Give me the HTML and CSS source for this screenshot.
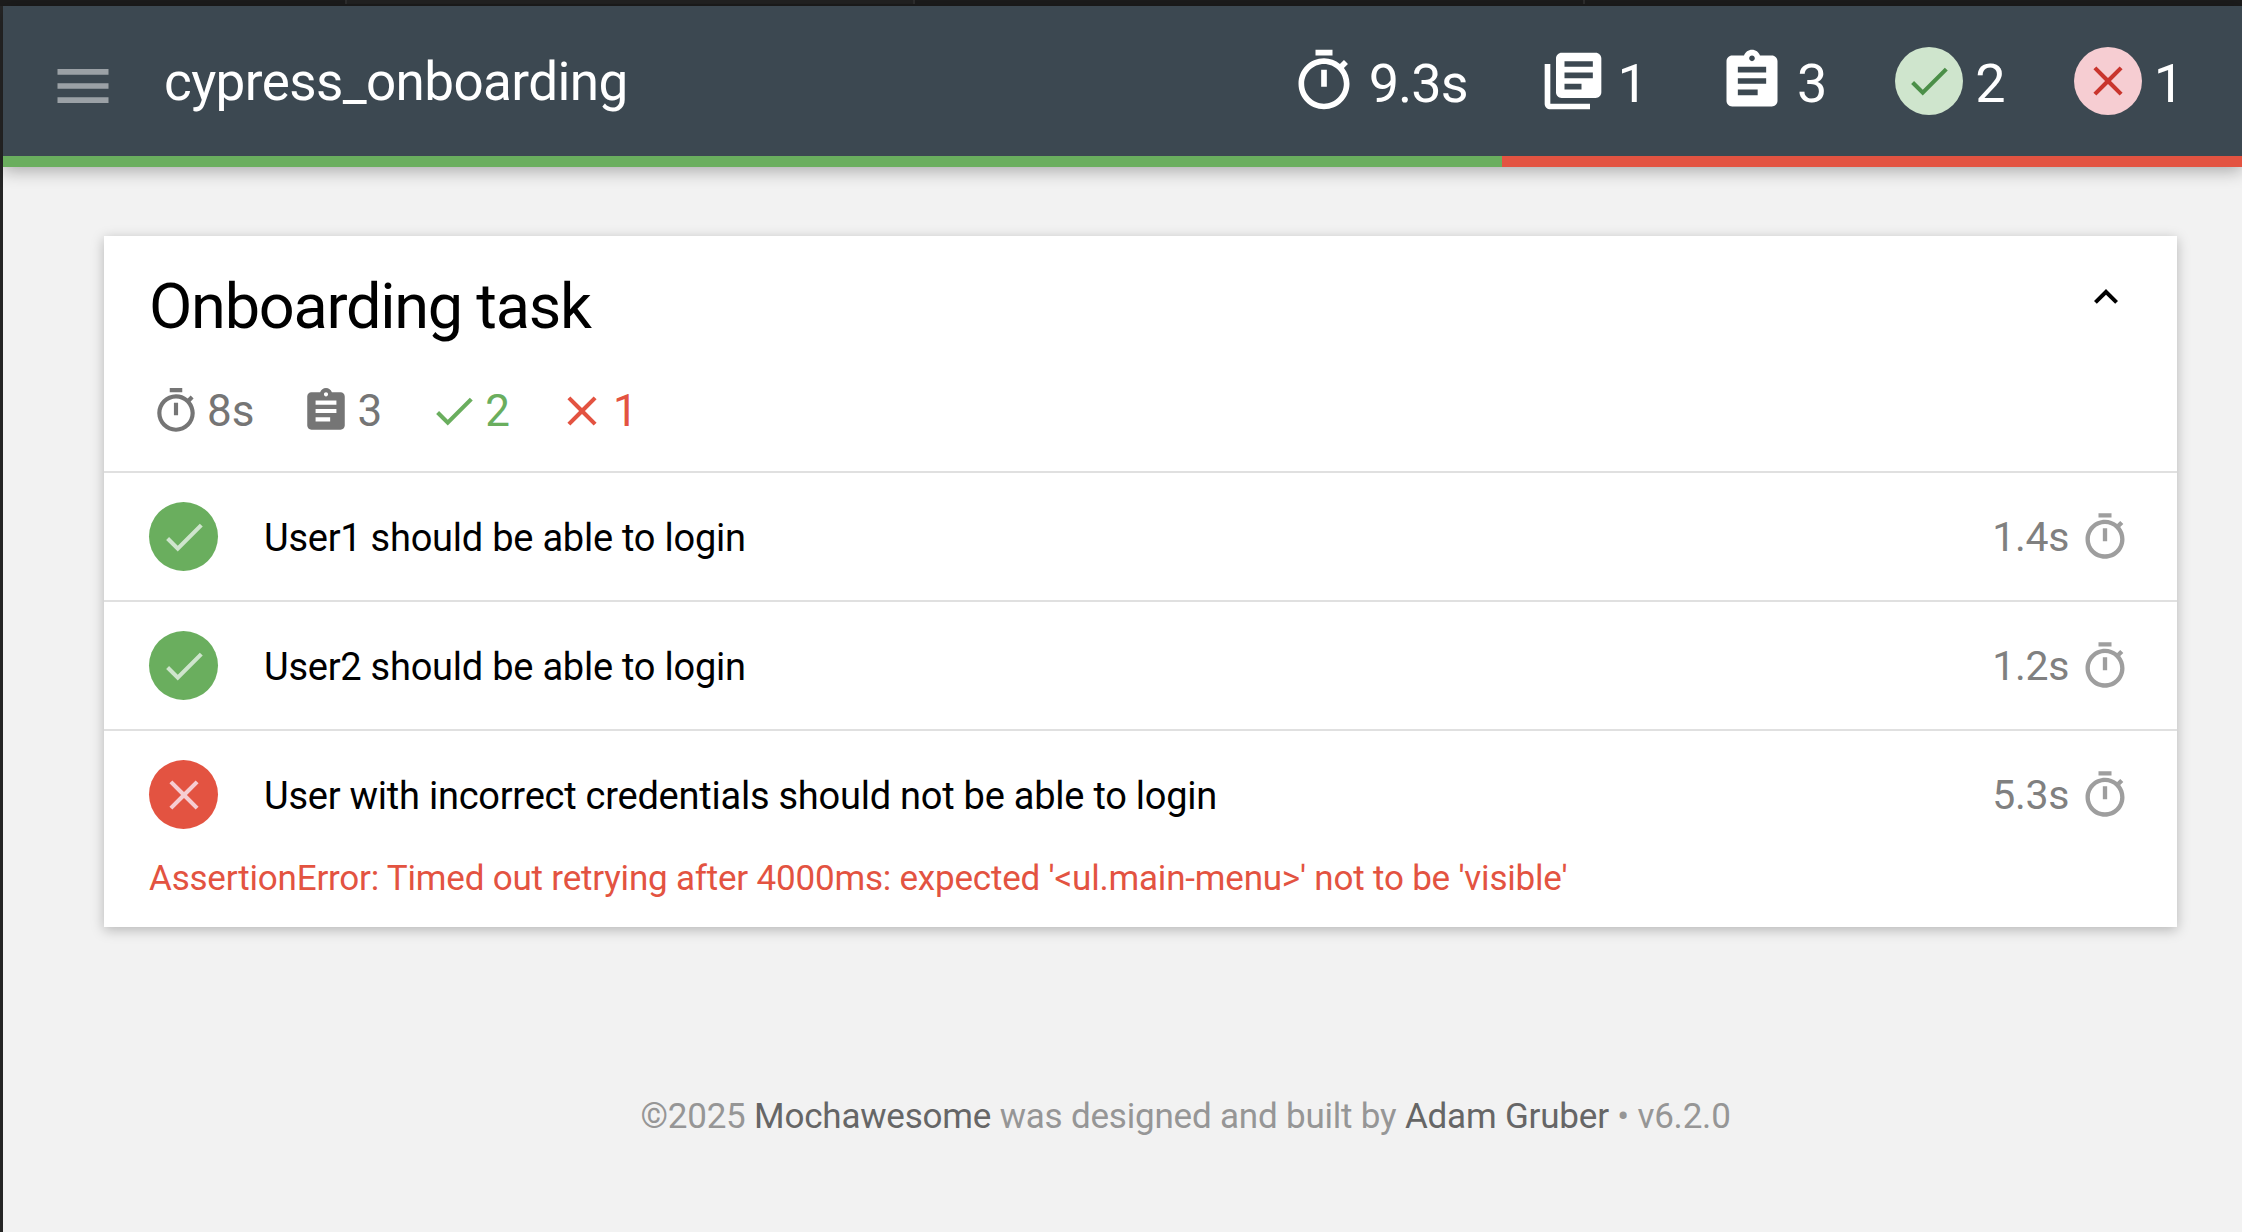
FILE: index.html
```html
<!DOCTYPE html>
<html lang="en">
<head>
    <meta charset="UTF-8">
    <title>cypress_onboarding</title>
    <link rel="stylesheet" href="styles.css">
</head>
<body>
    <svg class="sprites" width="0" height="0">
        <symbol id="i-timer" viewBox="0 0 24 24"><path d="M15 1H9v2h6V1zm-4 13h2V8h-2v6zm8.03-6.61l1.42-1.42c-.43-.51-.9-.99-1.41-1.41l-1.42 1.42C16.07 4.74 14.12 4 12 4c-4.97 0-9 4.03-9 9s4.02 9 9 9 9-4.03 9-9c0-2.12-.74-4.07-1.97-5.61zM12 20c-3.87 0-7-3.13-7-7s3.13-7 7-7 7 3.13 7 7-3.13 7-7 7z"/></symbol>
        <symbol id="i-books" viewBox="0 0 24 24"><path d="M4 6H2v14c0 1.1.9 2 2 2h14v-2H4V6zm16-4H8c-1.1 0-2 .9-2 2v12c0 1.1.9 2 2 2h12c1.1 0 2-.9 2-2V4c0-1.1-.9-2-2-2zm-1 9H9V9h10v2zm-4 4H9v-2h6v2zm4-8H9V5h10v2z"/></symbol>
        <symbol id="i-assign" viewBox="0 0 24 24"><path d="M19 3h-4.18C14.4 1.84 13.3 1 12 1c-1.3 0-2.4.84-2.82 2H5c-1.1 0-2 .9-2 2v14c0 1.1.9 2 2 2h14c1.1 0 2-.9 2-2V5c0-1.1-.9-2-2-2zm-7 0c.55 0 1 .45 1 1s-.45 1-1 1-1-.45-1-1 .45-1 1-1zm2 14H7v-2h7v2zm3-4H7v-2h10v2zm0-4H7V7h10v2z"/></symbol>
        <symbol id="i-check" viewBox="0 0 24 24"><path d="M9 16.17L4.83 12l-1.41 1.41L9 19 21 7l-1.41-1.41z"/></symbol>
        <symbol id="i-close" viewBox="0 0 24 24"><path d="M19 6.41L17.59 5 12 10.59 6.41 5 5 6.41 10.59 12 5 17.59 6.41 19 12 13.41 17.59 19 19 17.59 13.41 12z"/></symbol>
        <symbol id="i-menu" viewBox="0 0 24 24"><path d="M3 18h18v-2H3v2zm0-5h18v-2H3v2zm0-7v2h18V6H3z"/></symbol>
        <symbol id="i-less" viewBox="0 0 24 24"><path d="M12 8l-6 6 1.41 1.41L12 10.83l4.59 4.58L18 14z"/></symbol>
    </svg>

    <div class="top-strip">
        <div class="strip-seg strip-a"></div>
        <div class="strip-seg strip-b"></div>
        <div class="strip-seg strip-c"></div>
        <div class="strip-seg strip-d"></div>
    </div>

    <header class="navbar">
        <div class="nav-main">
            <svg class="nav-menu"><use href="#i-menu"/></svg>
            <div class="nav-title">cypress_onboarding</div>
            <ul class="nav-stats">
                <li class="stat stat-time"><svg class="stat-icon"><use href="#i-timer"/></svg><span class="stat-num">9.3s</span></li>
                <li class="stat stat-suites"><svg class="stat-icon"><use href="#i-books"/></svg><span class="stat-num">1</span></li>
                <li class="stat stat-tests"><svg class="stat-icon"><use href="#i-assign"/></svg><span class="stat-num">3</span></li>
                <li class="stat stat-pass"><span class="badge badge-pass"><svg><use href="#i-check"/></svg></span><span class="stat-num">2</span></li>
                <li class="stat stat-fail"><span class="badge badge-fail"><svg><use href="#i-close"/></svg></span><span class="stat-num">1</span></li>
            </ul>
        </div>
        <div class="progress">
            <div class="progress-pass"></div>
            <div class="progress-fail"></div>
        </div>
    </header>

    <main class="content">
        <section class="suite">
            <div class="suite-head">
                <div class="suite-title-row">
                    <h3 class="suite-title">Onboarding task</h3>
                    <svg class="suite-toggle"><use href="#i-less"/></svg>
                </div>
                <ul class="suite-stats">
                    <li class="sstat sstat-time"><svg><use href="#i-timer"/></svg>8s</li>
                    <li class="sstat sstat-tests"><svg><use href="#i-assign"/></svg>3</li>
                    <li class="sstat sstat-pass"><svg><use href="#i-check"/></svg>2</li>
                    <li class="sstat sstat-fail"><svg><use href="#i-close"/></svg>1</li>
                </ul>
            </div>

            <div class="test">
                <div class="test-row">
                    <span class="test-icon test-icon-pass"><svg><use href="#i-check"/></svg></span>
                    <span class="test-name">User1 should be able to login</span>
                    <span class="test-dur">1.4s</span>
                    <svg class="test-timer"><use href="#i-timer"/></svg>
                </div>
            </div>
            <div class="test">
                <div class="test-row">
                    <span class="test-icon test-icon-pass"><svg><use href="#i-check"/></svg></span>
                    <span class="test-name">User2 should be able to login</span>
                    <span class="test-dur">1.2s</span>
                    <svg class="test-timer"><use href="#i-timer"/></svg>
                </div>
            </div>
            <div class="test">
                <div class="test-row">
                    <span class="test-icon test-icon-fail"><svg><use href="#i-close"/></svg></span>
                    <span class="test-name">User with incorrect credentials should not be able to login</span>
                    <span class="test-dur">5.3s</span>
                    <svg class="test-timer"><use href="#i-timer"/></svg>
                </div>
                <p class="test-error">AssertionError: Timed out retrying after 4000ms: expected '&lt;ul.main-menu&gt;' not to be 'visible'</p>
            </div>
        </section>

        <footer class="footer">
            <p>©2025 <a>Mochawesome</a> was designed and built by <a>Adam Gruber</a> • v6.2.0</p>
        </footer>
    </main>
</body>
</html>
```

FILE: styles.css
```css
* {
    box-sizing: border-box;
}
html, body {
    height: 100%;
}
body {
    margin: 0;
    padding: 0 0 0 3px;
    background-color: #262626;
    font-family: Roboto, 'Liberation Sans', sans-serif;
    color: #000;
    overflow: hidden;
}
ul {
    list-style: none;
    margin: 0;
    padding: 0;
}
.sprites {
    position: absolute;
}

/* dark window edge above the header */
.top-strip {
    display: flex;
    height: 6px;
    margin-left: -3px;
    background-color: #1c1c1c;
}
.strip-seg {
    height: 4px;
    background-color: #1c1c1c;
    border-right: 2px solid #2e2e2e;
}
.strip-a { width: 347px; }
.strip-b { width: 568px; background-color: #222; }
.strip-c { width: 670px; }
.strip-d { flex: 1; border-right: 0; }

/* header */
.navbar {
    position: relative;
    z-index: 2;
    background-color: #3c4851;
    box-shadow: 0 4px 16px rgba(0,0,0,0.3);
}
.nav-main {
    display: flex;
    align-items: center;
    height: 150px;
    padding: 0 59px 0 46px;
}
.nav-menu {
    width: 68px;
    height: 68px;
    margin-top: 10px;
    fill: #9ba1a6;
    flex: none;
}
.nav-title {
    margin: 2px 0 0 47px;
    font-size: 53px;
    letter-spacing: -0.6px;
    color: #fff;
    flex: 1;
}
.nav-stats {
    display: flex;
    align-items: center;
    color: #fff;
    font-size: 54px;
    letter-spacing: -1px;
}
.stat {
    display: flex;
    align-items: center;
}
.stat-icon {
    width: 68px;
    height: 68px;
    fill: #fff;
    margin-right: 11px;
}
.stat-num {
    margin-top: 4px;
}
.stat-suites { margin-left: 71px; }
.stat-tests { margin-left: 71px; }
.stat-pass { margin-left: 69px; }
.stat-fail { margin-left: 69px; }
.badge {
    display: flex;
    align-items: center;
    justify-content: center;
    width: 68px;
    height: 68px;
    border-radius: 50%;
    margin-right: 12px;
}
.badge svg {
    width: 50px;
    height: 50px;
}
.badge-pass {
    background-color: #cfe5cd;
    fill: #4b8f48;
}
.badge-fail {
    background-color: #f6cdd2;
    fill: #c9352d;
}
.progress {
    display: flex;
    height: 11px;
}
.progress-pass {
    width: 1499px;
    background-color: #6aae5e;
}
.progress-fail {
    flex: 1;
    background-color: #e35341;
}

/* suite card */
.content {
    height: calc(100% - 167px);
    padding: 69px 65px 0 101px;
    background-color: #f2f2f2;
}
.suite {
    background-color: #fff;
    box-shadow: 0 3px 12px rgba(0,0,0,0.25);
}
.suite-head {
    height: 237px;
    padding: 0 47px 0 45px;
    border-bottom: 2px solid #e0e0e0;
}
.suite-title-row {
    display: flex;
    justify-content: space-between;
    padding-top: 34px;
}
.suite-title {
    margin: 0;
    font-size: 63px;
    font-weight: 400;
    letter-spacing: -1.25px;
    line-height: 74px;
}
.suite-toggle {
    width: 48px;
    height: 48px;
    margin: 3px 0 0;
    flex: none;
}
.suite-stats {
    display: flex;
    align-items: center;
    margin-top: 41px;
    padding-left: 2px;
    font-size: 44px;
}
.sstat {
    display: flex;
    align-items: center;
    margin-right: 47px;
}
.sstat svg {
    width: 50px;
    height: 50px;
    fill: currentColor;
    margin-right: 6px;
}
.sstat-time, .sstat-tests {
    color: #757575;
}
.sstat-pass {
    color: #6aae5e;
}
.sstat-fail {
    color: #e35341;
}

/* tests */
.test {
    padding: 0 46px 0 45px;
    border-bottom: 2px solid #e0e0e0;
}
.test:last-child {
    border-bottom: 0;
}
.test-row {
    display: flex;
    align-items: center;
    height: 127px;
}
.test-icon {
    display: flex;
    align-items: center;
    justify-content: center;
    width: 69px;
    height: 69px;
    border-radius: 50%;
    flex: none;
}
.test-icon svg {
    width: 50px;
    height: 50px;
}
.test-icon-pass {
    background-color: #6aae5e;
    fill: #cfe5cd;
}
.test-icon-fail {
    background-color: #e35341;
    fill: #f6cdd2;
}
.test-name {
    margin: 2px 0 0 46px;
    font-size: 38px;
    letter-spacing: -0.24px;
    flex: 1;
}
.test-dur {
    font-size: 41px;
    letter-spacing: -0.3px;
    color: #808080;
}
.test-timer {
    width: 52px;
    height: 52px;
    margin-left: 10px;
    fill: #9e9e9e;
}
.test-error {
    margin: 0;
    padding-bottom: 27px;
    font-size: 35px;
    letter-spacing: -0.2px;
    line-height: 42px;
    color: #e35341;
}

/* footer */
.footer {
    margin-top: 169px;
    padding-left: 90px;
    text-align: center;
    font-size: 35px;
    letter-spacing: -0.2px;
    color: #969696;
}
.footer p {
    margin: 0;
}
.footer a {
    color: #666;
}
```
